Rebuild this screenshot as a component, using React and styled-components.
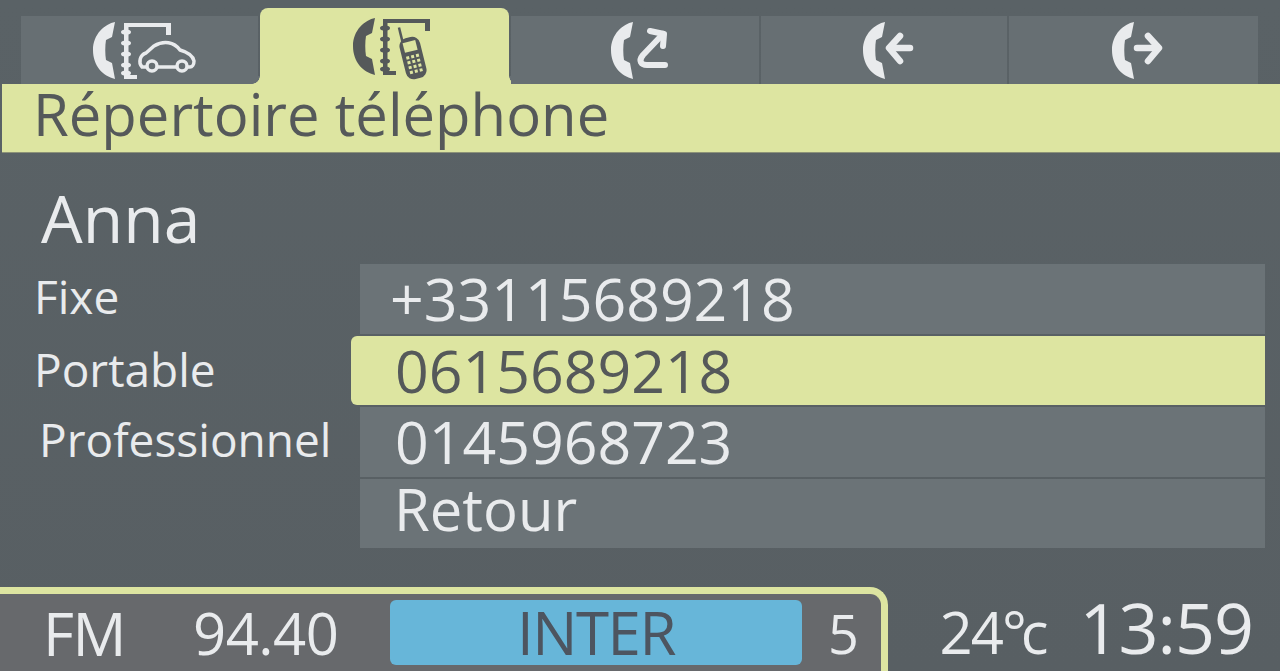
import React from "react"
import styled, { createGlobalStyle } from "styled-components"

const lime = "#dde5a1"
const dark = "#55595a"
const light = "#e9ebed"
const tabGrey = "#676f73"

const GlobalStyle = createGlobalStyle`
  html, body { margin: 0; padding: 0; height: 100%; overflow: hidden; background: #596165; }
  #root { height: 100%; }
`

const Screen = styled.div`
  width: 1280px;
  height: 671px;
  overflow: hidden;
  display: flex;
  flex-direction: column;
  background: linear-gradient(#5a6266, #585f63);
  font-family: "Open Sans", "Noto Sans", sans-serif;
`

const Tabs = styled.div`
  display: flex;
  align-items: flex-end;
  gap: 2px;
  height: 84px;
  padding: 0 22px 0 21px;
  box-sizing: border-box;
`

const Tab = styled.div`
  position: relative;
  width: ${p => p.$w}px;
  height: ${p => (p.$active ? 76 : 68)}px;
  display: flex;
  padding-left: ${p => p.$pad}px;
  box-sizing: border-box;
  color: ${p => (p.$active ? dark : light)};
  background: ${p => (p.$active ? lime : tabGrey)};
  border-radius: ${p => (p.$active ? "8px 8px 0 0" : "0")};
  svg { margin-top: ${p => (p.$active ? 10 : 6)}px; }

  ${p => p.$active && `
    &::before, &::after {
      content: "";
      position: absolute;
      bottom: 0;
      width: 8px;
      height: 8px;
    }
    &::before { left: -8px; background: radial-gradient(circle at 0 0, ${tabGrey} 7.5px, ${lime} 8px); }
    &::after { right: -8px; background: radial-gradient(circle at 100% 0, ${tabGrey} 7.5px, ${lime} 8px); }
  `}
`

const TitleBand = styled.div`
  height: 69px;
  margin-left: 2px;
  padding-left: 31px;
  background: ${lime};
  border-bottom: 1px solid #8c9278;
  box-sizing: border-box;
  color: ${dark};
  font-size: 58px;
  line-height: 60px;
`

const ContactName = styled.div`
  height: 111px;
  padding: 29px 0 0 41px;
  box-sizing: border-box;
  color: ${light};
  font-size: 66px;
  line-height: 70px;
`

const Rows = styled.div`
  display: flex;
  flex-direction: column;
  gap: 2px;
  padding-right: 15px;
`

const Row = styled.div`
  display: flex;
  align-items: center;
  height: ${p => p.$h}px;
`

const RowLabel = styled.div`
  width: 360px;
  flex: none;
  padding-left: ${p => p.$x}px;
  box-sizing: border-box;
  color: ${light};
  font-size: 46px;
  line-height: 50px;
  margin-top: ${p => p.$top}px;
`

const RowValue = styled.div`
  flex: 1;
  align-self: stretch;
  display: flex;
  align-items: center;
  padding-left: ${p => (p.$selected ? 44 : p.$x)}px;
  padding-bottom: ${p => p.$lift}px;
  box-sizing: border-box;
  margin-left: ${p => (p.$selected ? -9 : 0)}px;
  font-size: ${p => p.$size}px;
  line-height: 60px;
  color: ${p => (p.$selected ? dark : light)};
  background: ${p => (p.$selected ? lime : "#6b7377")};
  border-radius: ${p => (p.$selected ? "6px 0 0 6px" : "0")};
`

const Footer = styled.div`
  margin-top: auto;
  height: 84px;
  display: flex;
  align-items: flex-start;
`

const Radio = styled.div`
  width: 888px;
  height: 84px;
  flex: none;
  padding: 6px 0 0 43px;
  box-sizing: border-box;
  display: flex;
  align-items: flex-start;
  background: #67696c;
  border-top: 7px solid ${lime};
  border-right: 7px solid ${lime};
  border-top-right-radius: 18px;
  color: ${light};
`

const Band = styled.span`
  width: 150px;
  flex: none;
  font-size: 60px;
  line-height: 66px;
  letter-spacing: -1.5px;
`

const Frequency = styled.span`
  width: 197px;
  flex: none;
  font-size: 58px;
  line-height: 66px;
  letter-spacing: -0.5px;
`

const Station = styled.div`
  width: 412px;
  height: 65px;
  flex: none;
  border-radius: 6px;
  background: #67b6d9;
  color: #4d5560;
  font-size: 60px;
  line-height: 65px;
  letter-spacing: -1.5px;
  text-align: center;
`

const Preset = styled.span`
  margin-left: 26px;
  font-size: 54px;
  line-height: 66px;
`

const Status = styled.div`
  flex: 1;
  padding: 8px 27px 0 0;
  display: flex;
  justify-content: flex-end;
  align-items: baseline;
  color: ${light};
`

const Temperature = styled.span`
  font-size: 58px;
  line-height: 64px;
  letter-spacing: -2px;
  margin-right: 37px;
`

const Unit = styled.span`
  letter-spacing: -6px;
`

const Clock = styled.span`
  font-size: 70px;
  line-height: 64px;
  letter-spacing: -1px;
`

// same telephone receiver on all the tabs, drawn from its top left corner
const Handset = ({ x = 0 }) => (
  <path
    transform={`translate(${x} 0)`}
    fill="currentColor"
    d="M22 0 C12 2 0 12 0 28 C0 44 10 54 22 57 L19 41 L13 38 C12 32 12 24 13 18 L19 15 Z"
  />
)

const BookSpine = ({ x }) => (
  <g fill="currentColor" stroke="none">
    <rect x={x + 4} y="2" width="4.5" height="55" />
    <rect x={x + 4} y="1" width="47" height="4" />
    <rect x={x + 46} y="1" width="5" height="12" />
    <rect x={x + 4} y="53" width="13" height="4" />
    {[10, 21, 32, 43, 51].map(y => (
      <ellipse key={y} cx={x + 6} cy={y} rx="5" ry="2.6" />
    ))}
  </g>
)

const CarIcon = () => (
  <svg width="104" height="60" viewBox="0 0 104 60">
    <Handset x={1} />
    <BookSpine x={28} />
    <path
      d="M50 45 C46 40 48 33 54 31 L62 24 C72 18 82 20 88 28 C95 30 101 34 102 39 C102 43 100 45 98 45 Z"
      fill="none"
      stroke="currentColor"
      strokeWidth="3.5"
    />
    <g fill={tabGrey} stroke="currentColor" strokeWidth="3.5">
      <circle cx="60" cy="44" r="5" />
      <circle cx="90" cy="44" r="5" />
    </g>
  </svg>
)

const MobileIcon = () => (
  <svg width="82" height="62" viewBox="0 0 82 62">
    <Handset x={0} />
    <g transform="translate(-1 0)">
      <BookSpine x={27} />
    </g>
    <g transform="rotate(-14 60 38)">
      <rect x="49" y="19" width="21" height="42" rx="8" fill="currentColor" />
      <rect x="53" y="23" width="13" height="10" fill={lime} />
      <rect x="52" y="7" width="2.5" height="15" fill="currentColor" />
      {[37, 42, 47, 52].map(y =>
        [53, 58, 63].map(x => <rect key={`${x}-${y}`} x={x} y={y} width="3" height="3" fill={lime} />)
      )}
    </g>
  </svg>
)

const RedialIcon = () => (
  <svg width="60" height="60" viewBox="0 0 60 60">
    <Handset />
    <g fill="none" stroke="currentColor" strokeWidth="6" strokeLinecap="round" strokeLinejoin="round">
      <path d="M52 12 L32 33 C27 39 30 43 36 43 L54 43" />
      <path d="M39 9 L53 12 L52 24" />
    </g>
  </svg>
)

const ArrowIcon = ({ out }) => (
  <svg width="56" height="60" viewBox="0 0 56 60">
    <Handset />
    <g fill="none" stroke="currentColor" strokeWidth="6.5" strokeLinecap="round" strokeLinejoin="round">
      {out ? (
        <>
          <path d="M25 26 L46 26" />
          <path d="M36 14 L47 26 L36 39" />
        </>
      ) : (
        <>
          <path d="M27 26 L47 26" />
          <path d="M37 14 L26 26 L37 39" />
        </>
      )}
    </g>
  </svg>
)

const numbers = [
  { label: "Fixe", value: "+33115689218", h: 70, x: 34, top: -7, pad: 30, size: 59, lift: 2 },
  { label: "Portable", value: "0615689218", h: 69, x: 34, top: -3, selected: true, size: 59, lift: 2 },
  { label: "Professionnel", value: "0145968723", h: 70, x: 39, top: -6, pad: 35, size: 59, lift: 2 },
  { label: "", value: "Retour", h: 69, x: 0, top: 0, pad: 34, size: 58, lift: 10 },
]

export default function App() {
  return (
    <Screen>
      <GlobalStyle />
      <Tabs>
        <Tab $w={237} $pad={71}><CarIcon /></Tab>
        <Tab $w={250} $pad={93} $active><MobileIcon /></Tab>
        <Tab $w={248} $pad={100}><RedialIcon /></Tab>
        <Tab $w={247} $pad={102}><ArrowIcon /></Tab>
        <Tab $w={249} $pad={103}><ArrowIcon out /></Tab>
      </Tabs>
      <TitleBand>Répertoire téléphone</TitleBand>
      <ContactName>Anna</ContactName>
      <Rows>
        {numbers.map(n => (
          <Row key={n.value} $h={n.h}>
            <RowLabel $x={n.x} $top={n.top}>{n.label}</RowLabel>
            <RowValue $selected={n.selected} $x={n.pad} $size={n.size} $lift={n.lift}>{n.value}</RowValue>
          </Row>
        ))}
      </Rows>
      <Footer>
        <Radio>
          <Band>FM</Band>
          <Frequency>94.40</Frequency>
          <Station>INTER</Station>
          <Preset>5</Preset>
        </Radio>
        <Status>
          <Temperature>24<Unit>°c</Unit></Temperature>
          <Clock>13:59</Clock>
        </Status>
      </Footer>
    </Screen>
  )
}
